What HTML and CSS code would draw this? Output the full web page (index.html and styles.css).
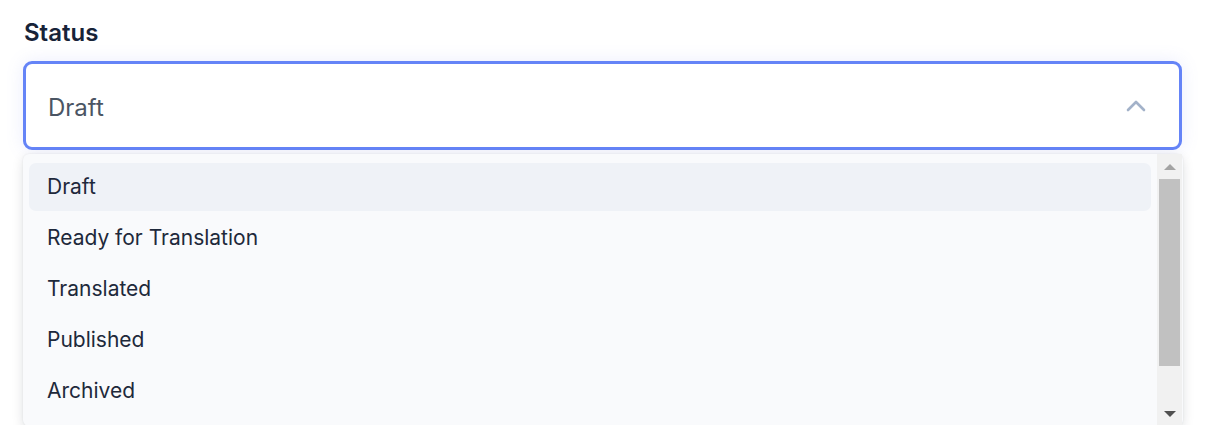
FILE: index.html
```html
<!DOCTYPE html>
<html>
<head>
<meta charset="utf-8">
<link rel="stylesheet" href="styles.css">
</head>
<body>
<div class="field">
  <label class="label">Status</label>
  <div class="select">
    <span class="select-value">Draft</span>
    <svg class="chevron" width="20" height="12" viewBox="0 0 20 12"><path d="M2 10 L10 2 L18 10" fill="none" stroke="#a3b2c9" stroke-width="2.6" stroke-linecap="round" stroke-linejoin="round"/></svg>
  </div>
  <div class="dropdown">
    <ul class="options">
      <li class="option active">Draft</li>
      <li class="option">Ready for Translation</li>
      <li class="option">Translated</li>
      <li class="option">Published</li>
      <li class="option">Archived</li>
    </ul>
    <div class="scrollbar">
      <div class="sb-btn"><span class="tri-up"></span></div>
      <div class="sb-track"><div class="sb-thumb"></div></div>
      <div class="sb-btn"><span class="tri-down"></span></div>
    </div>
  </div>
</div>
</body>
</html>
```
FILE: styles.css
```css
* { box-sizing: border-box; }
html, body { margin: 0; padding: 0; background: #ffffff; overflow: hidden; }
body {
  font-family: Inter, "Noto Sans", sans-serif;
  width: 1206px;
  height: 425px;
}
.field {
  padding: 18px 23px 0 23px;
  display: flex;
  flex-direction: column;
  width: 1206px;
}
.label {
  font-size: 24px;
  font-weight: 600;
  color: #172338;
  line-height: 30px;
  margin-left: 1px;
  margin-bottom: 13px;
}
.select {
  height: 89px;
  margin-right: 1px;
  border: 3px solid #6584f7;
  border-radius: 9px;
  display: flex;
  align-items: center;
  justify-content: space-between;
  padding: 3px 33px 0 22px;
  box-shadow: 0 0 18px rgba(110, 130, 240, 0.14);
  background: #fff;
}
.select-value {
  font-size: 24px;
  color: #4b5563;
}
.chevron { display: block; margin-top: -2px; }
.dropdown {
  margin-top: 4px;
  height: 272px;
  background: #f9fafc;
  border-radius: 6px;
  box-shadow: 0 4px 12px rgba(15, 23, 42, 0.13), 0 0 2px rgba(15, 23, 42, 0.08);
  display: flex;
  padding-right: 1px;
}
.options {
  list-style: none;
  margin: 0;
  padding: 9px 6px 0 6px;
  flex: 1;
  display: flex;
  flex-direction: column;
  gap: 3px;
}
.option {
  height: 48px;
  display: flex;
  align-items: center;
  padding-left: 18px;
  padding-bottom: 1px;
  font-size: 21px;
  color: #1e293b;
  border-radius: 7px;
}
.option.active { background: #eff2f7; }
.scrollbar {
  width: 25px;
  background: #f1f1f1;
  display: flex;
  flex-direction: column;
  padding: 0 2px;
}
.sb-btn {
  height: 25px;
  display: flex;
  align-items: center;
  justify-content: center;
}
.sb-track { flex: 1; }
.sb-thumb {
  height: 187px;
  background: #c1c1c1;
}
.tri-up {
  width: 0; height: 0;
  border-left: 6px solid transparent;
  border-right: 6px solid transparent;
  border-bottom: 6px solid #a3a3a3;
}
.tri-down {
  width: 0; height: 0;
  border-left: 6px solid transparent;
  border-right: 6px solid transparent;
  border-top: 6px solid #505050;
}
```
